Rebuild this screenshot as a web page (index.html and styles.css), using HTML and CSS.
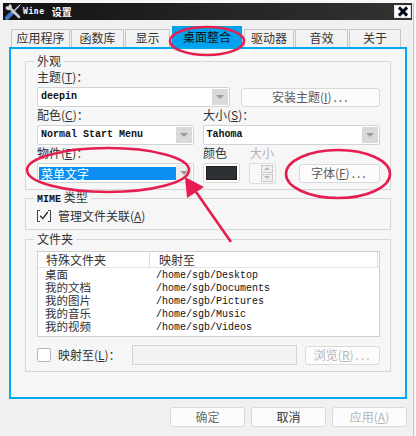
FILE: index.html
```html
<!DOCTYPE html>
<html lang="zh-CN">
<head>
<meta charset="utf-8">
<title>Wine 设置</title>
<link rel="stylesheet" href="styles.css">
</head>
<body>
<div class="window">
  <div class="titlebar">
    <svg class="app-icon" width="18" height="17" viewBox="0 0 18 17">
      <path d="M3 15 L8 10" stroke="#3f74c8" stroke-width="4" stroke-linecap="round"/>
      <path d="M8 10 L15 3" stroke="#b8bcc4" stroke-width="1.6"/>
      <path d="M15 3 L16.5 1.5" stroke="#e0e0e0" stroke-width="1"/>
      <path d="M6 5 L15 14" stroke="#c8ccd2" stroke-width="2.6" stroke-linecap="round"/>
      <path d="M1.5 4.5 A3.2 3.2 0 1 0 5.5 1 L4.3 3.6 L2.8 3 Z" fill="#d0d3d8"/>
    </svg>
    <span class="title"><span class="title-en">Wine</span><span class="title-cn">设置</span></span>
    <span class="close">
      <svg width="14" height="11" viewBox="0 0 14 11">
        <path d="M3 1.5 L11 9.5 M11 1.5 L3 9.5" stroke="#26457a" stroke-width="3.2"/>
        <path d="M3 1.5 L11 9.5 M11 1.5 L3 9.5" stroke="#000" stroke-width="2"/>
      </svg>
    </span>
  </div>

  <div class="client">
    <div class="tabs">
      <div class="tab t-app">应用程序</div>
      <div class="tab t-lib">函数库</div>
      <div class="tab t-disp">显示</div>
      <div class="tab active t-desk">桌面整合</div>
      <div class="tab t-drv">驱动器</div>
      <div class="tab t-snd">音效</div>
      <div class="tab t-about">关于</div>
    </div>

    <div class="page">
      <fieldset class="group appearance">
        <legend>外观</legend>
        <div class="lrow"><span>主题(<u>T</u>)：</span></div>
        <div class="crow">
          <div class="combo w-theme"><span class="mono">deepin</span><span class="drop"></span></div>
          <div class="btn w-install">安装主题(<u>I</u>)<span class="dots">...</span></div>
        </div>
        <div class="lrow">
          <span class="lcol">配色(<u>C</u>)：</span>
          <span>大小(<u>S</u>)：</span>
        </div>
        <div class="crow">
          <div class="combo w-left"><span class="mono">Normal Start Menu</span><span class="drop"></span></div>
          <div class="combo w-size"><span class="mono">Tahoma</span><span class="drop"></span></div>
        </div>
        <div class="lrow">
          <span class="lcol">物件(<u>E</u>)：</span>
          <span class="lcolor">颜色</span>
          <span class="disabled">大小</span>
        </div>
        <div class="crow">
          <div class="combo w-left item"><span class="selected">菜单文字</span><span class="drop light"></span></div>
          <div class="colorbtn"><div class="swatch"></div></div>
          <div class="spin">
            <div class="spin-btns"><span class="sb up"></span><span class="sb down"></span></div>
          </div>
          <div class="btn w-font">字体(<u>F</u>)<span class="dots">...</span></div>
        </div>
      </fieldset>

      <fieldset class="group mime">
        <legend><span class="mono legend-en">MIME</span> 类型</legend>
        <div class="checkrow">
          <svg class="bracket-check" width="14" height="12" viewBox="0 0 14 12">
            <path d="M3 0.5 H0.5 V11.5 H3" fill="none" stroke="#444" stroke-width="1"/>
            <path d="M11 0.5 H13.5 V11.5 H11" fill="none" stroke="#444" stroke-width="1"/>
            <path d="M3.2 5.8 L5.8 8.6 L10.8 2" fill="none" stroke="#222" stroke-width="1.3"/>
          </svg>
          <span>管理文件关联(<u>A</u>)</span>
        </div>
      </fieldset>

      <fieldset class="group folders">
        <legend>文件夹</legend>
        <div class="list">
          <div class="list-head">
            <span class="hcol h-name">特殊文件夹</span>
            <span class="hcol h-path">映射至</span>
          </div>
          <div class="list-row"><span class="c-name">桌面</span><span class="c-path mono-r">/home/sgb/Desktop</span></div>
          <div class="list-row"><span class="c-name">我的文档</span><span class="c-path mono-r">/home/sgb/Documents</span></div>
          <div class="list-row"><span class="c-name">我的图片</span><span class="c-path mono-r">/home/sgb/Pictures</span></div>
          <div class="list-row"><span class="c-name">我的音乐</span><span class="c-path mono-r">/home/sgb/Music</span></div>
          <div class="list-row"><span class="c-name">我的视频</span><span class="c-path mono-r">/home/sgb/Videos</span></div>
        </div>
        <div class="maprow">
          <span class="checkbox"></span>
          <span class="maplabel">映射至(<u>L</u>)：</span>
          <span class="field"></span>
          <div class="btn w-browse disabled">浏览(<u>R</u>)<span class="dots">...</span></div>
        </div>
      </fieldset>
    </div>

    <div class="dlg-buttons">
      <div class="btn dlg ok">确定</div>
      <div class="btn dlg cancel">取消</div>
      <div class="btn dlg disabled">应用(<u>A</u>)</div>
    </div>
  </div>

  <svg class="annotations" width="416" height="436" viewBox="0 0 416 436">
    <g fill="none" stroke="#e61e4f" stroke-width="2.6">
      <ellipse cx="207" cy="38" rx="37" ry="14"/>
      <ellipse cx="108" cy="167" rx="81" ry="22"/>
      <ellipse cx="338" cy="171" rx="52" ry="24"/>
      <path d="M231 239 L194 186"/>
    </g>
    <polygon points="185,174 187,195 204,184" fill="#e61e4f"/>
  </svg>
</div>
</body>
</html>
```

FILE: styles.css
```css
* { box-sizing: border-box; }

html, body { margin: 0; }

body {
  background: #f7f7f7;
  font-family: "Noto Sans CJK SC", "Noto Sans", sans-serif;
  font-size: 12px;
  line-height: 14px;
  color: #333;
}

u { text-decoration: underline; text-underline-offset: 1px; }

.window {
  position: relative;
  width: 414px;
  height: 435px;
  background: #f0f0f0;
  border-right: 1px solid #c4c4c4;
  border-bottom: 1px solid #c4c4c4;
}

/* title bar */
.titlebar {
  margin: 3px 1px 0 3px;
  height: 17px;
  background: linear-gradient(90deg, #111 0%, #222 45%, #323232 100%);
  display: flex;
  align-items: center;
  color: #fff;
}
.app-icon { margin-left: 1px; flex: none; }
.title { display: flex; align-items: center; margin-left: 1px; }
.title-en {
  font-family: "DejaVu Sans Mono", monospace;
  font-weight: bold;
  font-size: 8px;
  letter-spacing: 0.6px;
}
.title-cn { margin-left: 7px; font-size: 10px; font-weight: bold; }
.close {
  margin-left: auto;
  margin-right: 1px;
  width: 17px;
  height: 13px;
  background: #fff;
  border: 1px solid #e4e4e4;
  display: flex;
  align-items: center;
  justify-content: center;
}

/* client */
.client { padding: 6px 6px 0 9px; }

.tabs {
  display: flex;
  align-items: flex-end;
  height: 21px;
  padding-left: 2px;
  gap: 1px;
}
.tab {
  height: 18px;
  border: 1px solid #c6c6c6;
  border-bottom: none;
  background: #f2f2f2;
  text-align: center;
  line-height: 16px;
  color: #333;
  font-size: 12px;
}
.t-app { width: 59px; }
.t-lib { width: 53px; }
.t-disp { width: 45px; }
.t-desk { width: 70px; }
.t-drv { width: 50px; }
.t-snd { width: 53px; }
.t-about { width: 52px; }
.tab.active {
  height: 21px;
  background: #00a2ee;
  border-color: #00a2ee;
  color: #111;
  line-height: 20px;
  margin: 0 1px;
}

.page {
  height: 352px;
  border: 2px solid #00a9f4;
  padding: 5px 14px 0 14px;
  background: #f6f6f6;
}

/* group boxes */
fieldset.group {
  margin: 0;
  min-width: 0;
  border: 1px solid #d6d6d6;
  padding: 2px 10px 6px 11px;
}
fieldset.group legend {
  padding: 0 3px;
  margin-left: -3px;
  line-height: 14px;
  font-size: 12px;
  color: #333;
}
.legend-en { font-size: 10px; }

.lrow { display: flex; height: 14px; margin-top: 1px; }
.lrow:first-of-type { margin-top: 0; }
.crow { display: flex; align-items: center; height: 20px; margin-top: 3px; }
.lcol { width: 166px; }
.lcolor { width: 47px; }
.disabled { color: #b4b4b4; }

.mono {
  font-family: "Liberation Mono", monospace;
  font-size: 10px;
  font-weight: bold;
  color: #111;
}
.mono-r {
  font-family: "Liberation Mono", monospace;
  font-size: 10px;
  color: #111;
}

.combo {
  height: 20px;
  background: #fff;
  border: 1px solid #d3d3d3;
  border-radius: 2px;
  display: flex;
  align-items: center;
  padding-left: 3px;
}
.w-theme { width: 194px; margin-right: 11px; }
.w-left { width: 157px; margin-right: 9px; }
.w-size { width: 178px; }
.drop {
  margin-left: auto;
  align-self: stretch;
  margin-top: 1px;
  margin-bottom: 1px;
  margin-right: 1px;
  width: 16px;
  background: #d9d9d9;
  display: flex;
  align-items: center;
  justify-content: center;
}
.drop::after {
  content: "";
  border-left: 4px solid transparent;
  border-right: 4px solid transparent;
  border-top: 4px solid #9a9a9a;
}
.drop.light { background: #ececec; }

.item { padding-left: 1px; }
.selected {
  width: 137px;
  height: 13px;
  background: #0c8ef2;
  color: #fff;
  line-height: 13px;
  padding-left: 2px;
}

.btn {
  height: 19px;
  background: #fcfcfc;
  border: 1px solid #d9d9d9;
  border-radius: 3px;
  display: flex;
  align-items: center;
  justify-content: center;
  color: #5a5a5a;
  font-size: 12px;
}
.dots { letter-spacing: 2px; margin-left: 2px; }
.btn.disabled { color: #b5b5b5; }
.w-install { width: 139px; }
.w-font { width: 82px; margin-left: 23px; }

.colorbtn {
  width: 37px;
  height: 20px;
  border: 1px solid #d6d6d6;
  border-radius: 3px;
  background: #fff;
  padding: 2px;
  margin-right: 9px;
}
.swatch {
  height: 100%;
  background: #2d3135;
  border: 1px solid #1c1c1c;
}

.spin {
  width: 27px;
  height: 21px;
  border: 1px solid #dcdcdc;
  border-radius: 2px;
  background: #f8f8f8;
  display: flex;
  justify-content: flex-end;
  padding: 1px 2px;
}
.spin-btns { width: 12px; display: flex; flex-direction: column; gap: 1px; }
.sb {
  flex: 1;
  border: 1px solid #c9c9c9;
  background: #efefef;
  display: flex;
  align-items: center;
  justify-content: center;
}
.sb.up::after {
  content: "";
  border-left: 3px solid transparent;
  border-right: 3px solid transparent;
  border-bottom: 3px solid #b8b8b8;
}
.sb.down::after {
  content: "";
  border-left: 3px solid transparent;
  border-right: 3px solid transparent;
  border-top: 3px solid #b8b8b8;
}

/* MIME group */
fieldset.mime { margin-top: 0; padding: 2px 10px 6px 11px; }
.checkrow { display: flex; align-items: center; height: 14px; gap: 7px; }
.bracket-check { flex: none; }

/* folders group */
fieldset.folders { margin-top: 2px; padding: 5px 10px 6px 11px; }
.list {
  height: 86px;
  border: 1px solid #d0d0d0;
  background: #fff;
}
.list-head {
  display: flex;
  height: 16px;
  border-bottom: 1px solid #e4e4e4;
}
.hcol { line-height: 15px; color: #333; border-right: 1px solid #dedede; }
.h-name { width: 112px; padding-left: 8px; }
.h-path { width: 228px; padding-left: 9px; }
.list-row { display: flex; height: 13px; line-height: 13px; }
.list-head + .list-row { margin-top: 1px; }
.c-name {
  width: 118px;
  padding-left: 7px;
  color: #333;
  font-family: "Liberation Serif", "Noto Sans CJK SC", serif;
  font-size: 11.5px;
}
.c-path { line-height: 13px; }

.maprow { display: flex; align-items: center; height: 20px; margin-top: 8px; }
.checkbox {
  width: 14px;
  height: 14px;
  border: 1px solid #b9b9b9;
  border-radius: 2px;
  background: #fff;
  margin-right: 7px;
}
.maplabel { width: 75px; }
.field {
  width: 166px;
  height: 20px;
  border: 1px solid #d4d4d4;
  background: #f3f3f3;
  margin-right: 8px;
}
.w-browse { width: 75px; }

/* dialog buttons */
.dlg-buttons {
  display: flex;
  justify-content: flex-end;
  gap: 6px;
  margin-top: 8px;
}
.btn.dlg { width: 75px; height: 20px; }
.btn.ok { color: #6e6e6e; }
.btn.cancel { color: #333; }

/* annotations drawn over the screenshot */
.annotations {
  position: absolute;
  left: 0;
  top: 0;
  pointer-events: none;
}
```
